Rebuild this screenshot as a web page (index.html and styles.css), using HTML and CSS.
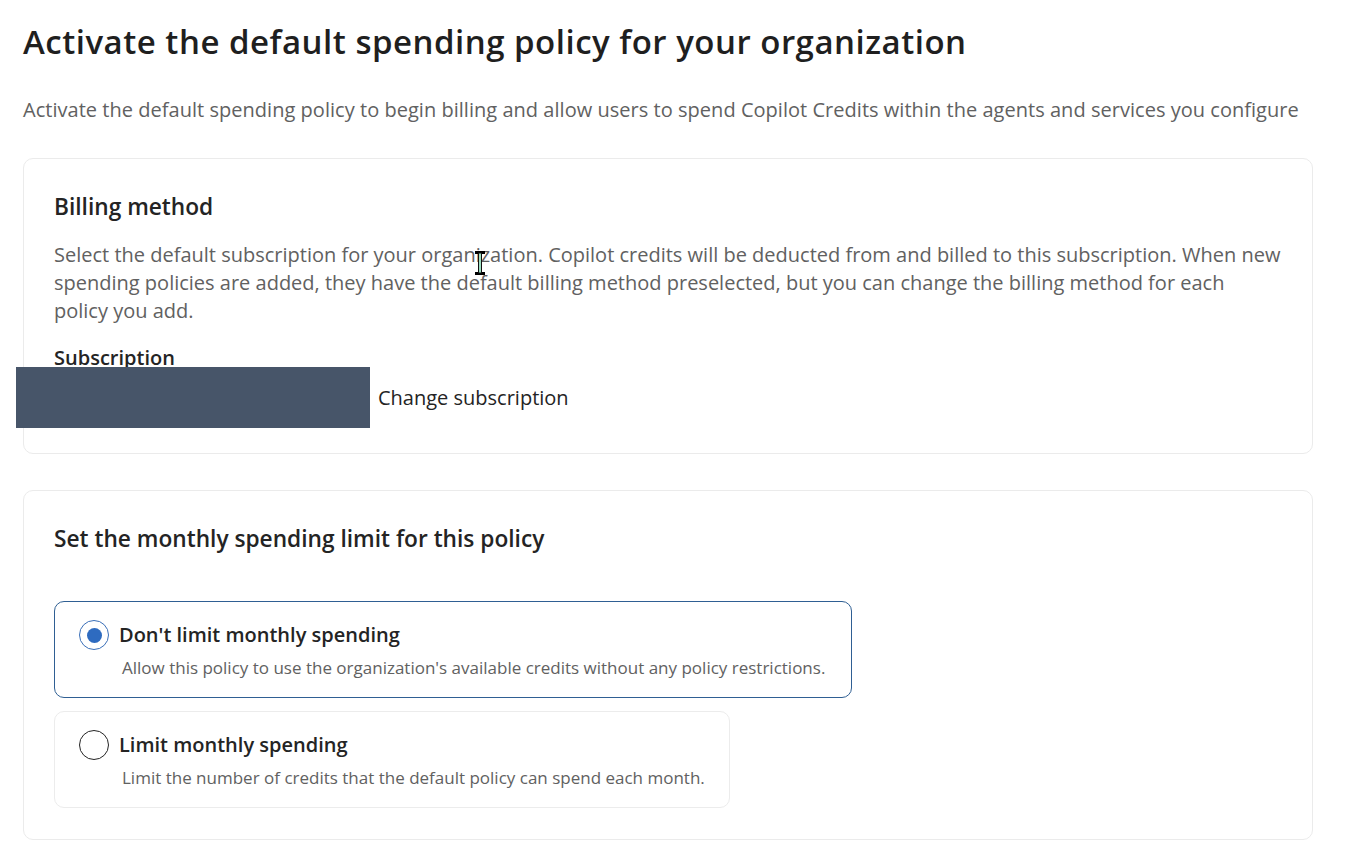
FILE: index.html
```html
<!DOCTYPE html>
<html lang="en">
<head>
<meta charset="utf-8">
<title>Activate the default spending policy</title>
<link rel="stylesheet" href="styles.css">
</head>
<body>
<main class="page">
  <h1 class="title">Activate the default spending policy for your organization</h1>
  <p class="subtitle">Activate the default spending policy to begin billing and allow users to spend Copilot Credits within the agents and services you configure</p>

  <section class="card billing">
    <h2 class="card-title">Billing method</h2>
    <p class="card-text">Select the default subscription for your organization. Copilot credits will be deducted from and billed to this subscription. When new spending policies are added, they have the default billing method preselected, but you can change the billing method for each policy you add.</p>
    <div class="field-label">Subscription</div>
    <div class="sub-row">
      <div class="redacted"></div>
      <span class="change-link">Change subscription</span>
    </div>
    <svg class="cursor" width="12" height="26" viewBox="0 0 12 26" aria-hidden="true">
      <path d="M1 1h10v3H1zM1 22h10v3H1z" fill="#000"/>
      <rect x="4.5" y="3" width="3" height="20" fill="#9fe0c4" stroke="#111" stroke-width="1"/>
    </svg>
  </section>

  <section class="card limit">
    <h2 class="card-title">Set the monthly spending limit for this policy</h2>
    <div class="options">
      <label class="option selected">
        <span class="radio checked"></span>
        <span class="option-body">
          <span class="option-title">Don't limit monthly spending</span>
          <span class="option-desc">Allow this policy to use the organization's available credits without any policy restrictions.</span>
        </span>
      </label>
      <label class="option">
        <span class="radio"></span>
        <span class="option-body">
          <span class="option-title">Limit monthly spending</span>
          <span class="option-desc">Limit the number of credits that the default policy can spend each month.</span>
        </span>
      </label>
    </div>
  </section>
</main>
</body>
</html>
```

FILE: styles.css
```css
* { box-sizing: border-box; }

html, body {
  margin: 0;
  padding: 0;
  background: #ffffff;
}

body {
  font-family: "Open Sans", "Noto Sans", "Liberation Sans", sans-serif;
  color: #242424;
}

.page {
  padding: 20px 34px 0 23px;
  width: 1347px;
}

.title {
  margin: 0;
  font-size: 33px;
  font-weight: 600;
  line-height: 44px;
  color: #1f1f1f;
  letter-spacing: 0.5px;
}

.subtitle {
  margin: 32px 0 0;
  font-size: 20px;
  line-height: 28px;
  color: #616161;
  letter-spacing: 0.03px;
}

.card {
  position: relative;
  width: 1290px;
  border: 1px solid #ebebeb;
  border-radius: 10px;
  background: #fff;
  padding: 0 30px;
}

.billing {
  margin-top: 34px;
  padding-top: 32px;
  padding-bottom: 25px;
}

.limit {
  margin-top: 36px;
  padding-top: 32px;
  padding-bottom: 31px;
}

.card-title {
  margin: 0;
  font-size: 22.7px;
  font-weight: 600;
  line-height: 32px;
  color: #242424;
}

.card-text {
  margin: 18px 0 0;
  font-size: 20px;
  line-height: 28px;
  color: #616161;
  max-width: 1228px;
}

.field-label {
  margin-top: 23px;
  font-size: 20px;
  font-weight: 600;
  line-height: 19px;
  color: #242424;
}

.sub-row {
  display: flex;
  align-items: center;
  gap: 8px;
  margin-left: -38px;
}

.redacted {
  width: 354px;
  height: 61px;
  background: #475569;
}

.change-link {
  font-size: 20px;
  color: #242424;
}

.cursor {
  position: absolute;
  left: 450px;
  top: 91px;
}

.options {
  margin-top: 46px;
  display: flex;
  flex-direction: column;
  align-items: flex-start;
  gap: 13px;
}

.option {
  display: flex;
  align-items: flex-start;
  gap: 10px;
  width: fit-content;
  padding: 18px 26px 17px 24px;
  border: 1px solid #ececec;
  border-radius: 10px;
  cursor: pointer;
}

.option + .option {
  padding-right: 24px;
}

.option.selected {
  border-color: #2f5f93;
}

.radio {
  flex: none;
  width: 30px;
  height: 30px;
  border: 1.5px solid #242424;
  border-radius: 50%;
  display: flex;
  align-items: center;
  justify-content: center;
}

.radio.checked {
  border: 1.2px solid #3a6fb8;
}

.radio.checked::after {
  content: "";
  width: 15px;
  height: 15px;
  border-radius: 50%;
  background: #2e6bc0;
}

.option-body {
  display: flex;
  flex-direction: column;
}

.option-title {
  font-size: 20px;
  font-weight: 600;
  line-height: 30px;
  color: #242424;
}

.option-desc {
  margin-top: 6px;
  padding-left: 3px;
  font-size: 17px;
  line-height: 24px;
  color: #616161;
}
```
